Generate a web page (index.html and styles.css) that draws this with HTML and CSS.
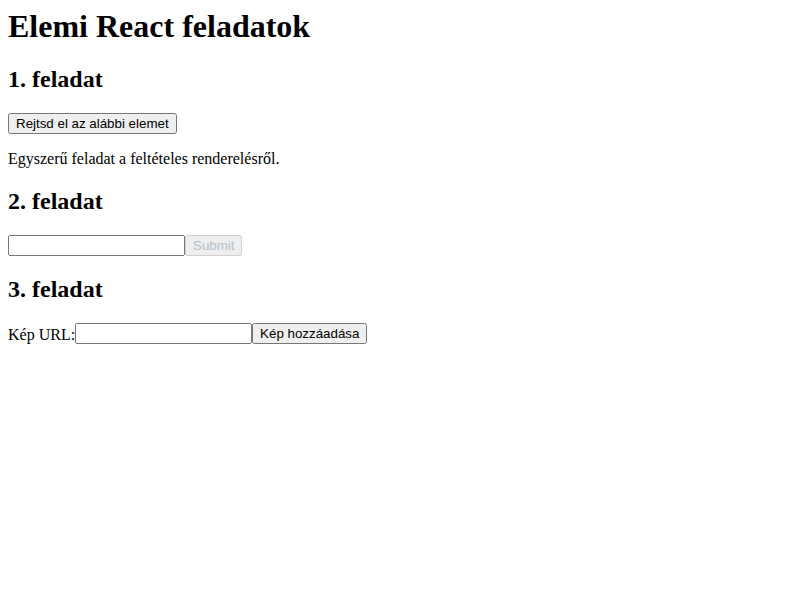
FILE: index.html
```html
<!DOCTYPE html>
<html lang="hu">
<head>
<meta charset="utf-8">
<title>Elemi React feladatok</title>
<link rel="stylesheet" href="styles.css">
</head>
<body>
<div id="root">
  <h1>Elemi React feladatok</h1>
  <section>
    <h2>1. feladat</h2>
    <button class="btn">Rejtsd el az alábbi elemet</button>
    <p>Egyszerű feladat a feltételes renderelésről.</p>
  </section>
  <section>
    <h2>2. feladat</h2>
    <form class="row"><input class="field" type="text"><button class="btn btn-disabled" type="submit" disabled>Submit</button></form>
  </section>
  <section>
    <h2>3. feladat</h2>
    <div class="row"><label for="url">Kép URL:</label><input id="url" class="field" type="text"><button class="btn">Kép hozzáadása</button></div>
  </section>
</div>
</body>
</html>
```
FILE: styles.css
```css
body {
  margin: 8px;
  font-family: "Liberation Serif", "Times New Roman", serif;
  font-size: 16px;
  color: #000;
  background: #fff;
}
h1 { font-size: 32px; margin: 0 0 21.44px; }
h2 { font-size: 24px; margin: 19.92px 0; }
p { margin: 16px 0; }
.row { margin: 0; }
.btn, .field {
  font-family: "Liberation Sans", Arial, sans-serif;
  font-size: 13.333px;
}
.field {
  box-sizing: border-box;
  width: 177px;
  height: 21px;
  vertical-align: bottom;
}
.btn { vertical-align: bottom; height: 21px; }
.btn-disabled { color: #b3c1cd; }
```
